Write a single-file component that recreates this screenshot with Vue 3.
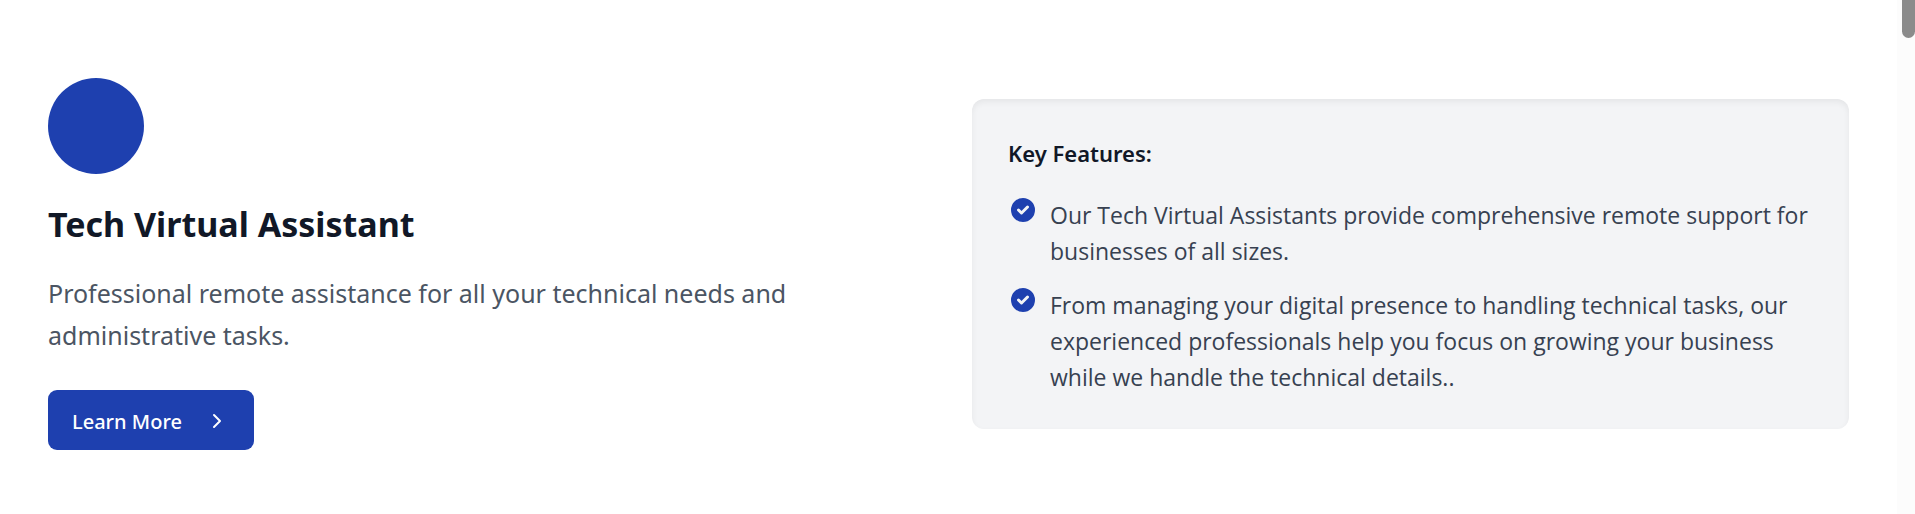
<script setup>
const features = [
  'Our Tech Virtual Assistants provide comprehensive remote support for businesses of all sizes.',
  'From managing your digital presence to handling technical tasks, our experienced professionals help you focus on growing your business while we handle the technical details..',
]
</script>

<template>
  <div class="page">
    <main class="service">
      <section class="intro">
        <div class="badge"></div>
        <h2 class="title">Tech Virtual Assistant</h2>
        <p class="description">
          Professional remote assistance for all your technical needs and administrative tasks.
        </p>
        <a class="button" href="#learn-more">
          Learn More
          <svg class="chevron" viewBox="0 0 30 30" aria-hidden="true">
            <path d="M12 9l6 6-6 6" />
          </svg>
        </a>
      </section>

      <section class="card">
        <h3 class="card-title">Key Features:</h3>
        <ul class="features">
          <li v-for="feature in features" :key="feature" class="feature">
            <svg class="check" viewBox="0 0 20 20" aria-hidden="true">
              <path
                fill-rule="evenodd"
                clip-rule="evenodd"
                d="M10 18a8 8 0 100-16 8 8 0 000 16zm3.707-9.293a1 1 0 00-1.414-1.414L9 10.586 7.707 9.293a1 1 0 00-1.414 1.414l2 2a1 1 0 001.414 0l4-4z"
              />
            </svg>
            <span class="feature-text">{{ feature }}</span>
          </li>
        </ul>
      </section>
    </main>
    <div class="scroll-track" aria-hidden="true"><div class="scroll-thumb"></div></div>
  </div>
</template>

<style>
body {
  background: #fff;
}
</style>

<style scoped>
.page {
  display: flex;
  min-height: 100vh;
  font-family: "Noto Sans", "Open Sans", sans-serif;
}

.service {
  flex: 1;
  display: grid;
  grid-template-columns: 1fr 1fr;
  gap: 47px;
  align-items: center;
  align-content: start;
  padding: 78px 48px 64px;
}

.badge {
  width: 96px;
  height: 96px;
  border-radius: 50%;
  background: #1e40af;
}

.title {
  margin: 26px 0 24px;
  font-size: 34px;
  line-height: 48px;
  font-weight: 700;
  color: #111827;
}

.description {
  margin: 0 0 34px;
  font-size: 25px;
  line-height: 42px;
  color: #4b5563;
}

.button {
  display: inline-flex;
  align-items: center;
  gap: 20px;
  height: 60px;
  padding: 2px 22px 0 24px;
  box-sizing: border-box;
  border-radius: 9px;
  background: #1e40af;
  color: #fff;
  font-size: 20px;
  font-weight: 500;
  text-decoration: none;
  vertical-align: top;
}

.chevron {
  width: 30px;
  height: 30px;
  fill: none;
  stroke: currentColor;
  stroke-width: 2;
  stroke-linecap: round;
  stroke-linejoin: round;
}

.card {
  padding: 36px;
  border-radius: 12px;
  background: #f3f4f6;
  box-shadow: inset 0 3px 6px rgba(0, 0, 0, 0.06);
}

.card-title {
  margin: 0 0 24px;
  font-size: 22px;
  line-height: 36px;
  font-weight: 600;
  color: #111827;
}

.features {
  display: grid;
  gap: 16px;
  margin: 0 0 -2px;
  padding: 0;
  list-style: none;
}

.feature {
  display: flex;
  align-items: flex-start;
  gap: 12px;
  font-family: "Open Sans", "Noto Sans", sans-serif;
  font-size: 23px;
  line-height: 36px;
  color: #374151;
}

.feature-text {
  padding-top: 2px;
}

.check {
  flex: none;
  width: 30px;
  height: 30px;
  fill: #1e40af;
}

.scroll-track {
  display: flex;
  justify-content: flex-end;
  width: 18px;
  background: #fcfcfc;
}

.scroll-thumb {
  width: 13px;
  height: 38px;
  border-radius: 0 0 7px 7px;
  background: #8b8b8b;
}
</style>
